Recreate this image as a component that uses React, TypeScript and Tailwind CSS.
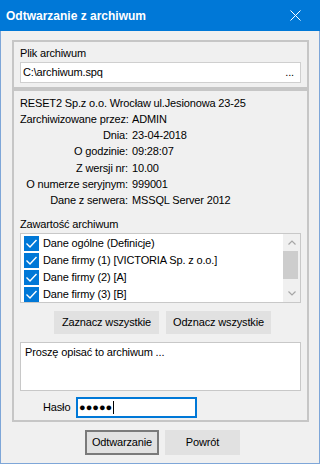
const INFO: [string, string][] = [
  ["Zarchiwizowane przez:", "ADMIN"],
  ["Dnia:", "23-04-2018"],
  ["O godzinie:", "09:28:07"],
  ["Z wersji nr:", "10.00"],
  ["O numerze seryjnym:", "999001"],
  ["Dane z serwera:", "MSSQL Server 2012"],
];

const ITEMS = [
  "Dane ogólne (Definicje)",
  "Dane firmy (1) [VICTORIA Sp. z o.o.]",
  "Dane firmy (2) [A]",
  "Dane firmy (3) [B]",
];

function CheckBox() {
  return (
    <div className="flex h-[15px] w-[15px] shrink-0 items-center justify-center bg-[#0078d7]">
      <svg width="15" height="15" viewBox="0 0 15 15">
        <path d="M2.5 7.5L6 11L12.5 4" fill="none" stroke="white" strokeWidth="1.4" />
      </svg>
    </div>
  );
}

function Chevron({ up }: { up?: boolean }) {
  return (
    <div className="flex h-[17px] items-center justify-center">
      <svg width="8" height="5" viewBox="0 0 8 5">
        <path d={up ? "M0.5 4.5L4 1L7.5 4.5" : "M0.5 0.5L4 4L7.5 0.5"} fill="none" stroke="#a6a6a6" strokeWidth="1.2" />
      </svg>
    </div>
  );
}

export default function App() {
  return (
    <div className="flex h-[464px] w-[320px] flex-col bg-[#f0f0f0] font-['Liberation_Sans',Arial,sans-serif] text-[11px] tracking-[-0.15px] text-black">
      <div className="flex h-[31px] shrink-0 items-center justify-between bg-[#0078d7] pl-[6px] pr-[19px] text-white">
        <span className="text-[12px] font-bold tracking-normal">Odtwarzanie z archiwum</span>
        <svg width="11" height="11" viewBox="0 0 11 11">
          <path d="M0.5 0.5L10.5 10.5M10.5 0.5L0.5 10.5" stroke="white" strokeWidth="1" />
        </svg>
      </div>

      <div className="flex flex-1 flex-col border-x border-b border-[#7ea6d8] pl-[11px] pr-[10px] pt-[9px]">
        {/* plik */}
        <div className="h-[49px] border-2 border-[#c6c6c6] px-[6px] pt-[3px]">
          <div className="leading-[17px]">Plik archiwum</div>
          <div className="flex h-[21px] items-center justify-between border border-[#cfcfcf] bg-white pl-[2px] pr-[6px]">
            <span>C:\archiwum.spq</span>
            <span>...</span>
          </div>
        </div>

        {/* info + content */}
        <div className="flex h-[333px] flex-col border-2 border-[#c6c6c6] px-[6px] pt-[3.5px]">
          <div className="leading-[16.3px]">RESET2 Sp.z o.o. Wrocław ul.Jesionowa 23-25</div>
          <div className="grid grid-cols-[108px_1fr] gap-x-[4px] leading-[16.3px]">
            {INFO.map(([k, v]) => (
              <div key={k} className="contents">
                <span className="whitespace-nowrap text-right">{k}</span>
                <span>{v}</span>
              </div>
            ))}
          </div>

          <div className="mt-[6px] leading-[18px]">Zawartość archiwum</div>
          <div className="flex h-[70px] border border-[#c8c8c8] bg-white">
            <div className="flex-1 pl-[3px] pt-[1px]">
              {ITEMS.map((it) => (
                <div key={it} className="flex h-[17px] items-center gap-[4px]">
                  <CheckBox />
                  <span className="whitespace-nowrap">{it}</span>
                </div>
              ))}
            </div>
            <div className="flex w-[17px] flex-col bg-[#f0f0f0]">
              <Chevron up />
              <div className="mr-[2px] h-[28px] bg-[#cdcdcd]" />
              <div className="flex-1" />
              <Chevron />
            </div>
          </div>

          <div className="mt-[8px] flex gap-[7px] pl-[34px]">
            <button className="h-[23px] w-[105px] bg-[#e1e1e1]">Zaznacz wszystkie</button>
            <button className="h-[23px] w-[105px] bg-[#e1e1e1]">Odznacz wszystkie</button>
          </div>

          <div className="mt-[8px] h-[49px] border border-[#c8c8c8] bg-white px-[4px] pt-[1px] leading-[17px]">
            Proszę opisać to archiwum ...
          </div>

          <div className="mt-[6px] flex h-[21px] items-center pl-[23px]">
            <span className="w-[33px]">Hasło</span>
            <div className="flex h-[21px] w-[121px] items-center border-2 border-[#0078d7] bg-white pl-[1px] tracking-normal">
              <span>●●●●●</span>
              <span className="ml-[1px] h-[13px] w-[1px] bg-black" />
            </div>
          </div>
        </div>

        <div className="mt-[8px] flex gap-[6px] pl-[73px]">
          <button className="h-[25px] w-[74px] border-2 border-[#7a7a7a] bg-[#e1e1e1]">Odtwarzanie</button>
          <button className="h-[25px] w-[75px] bg-[#e1e1e1]">Powrót</button>
        </div>
      </div>
    </div>
  );
}
